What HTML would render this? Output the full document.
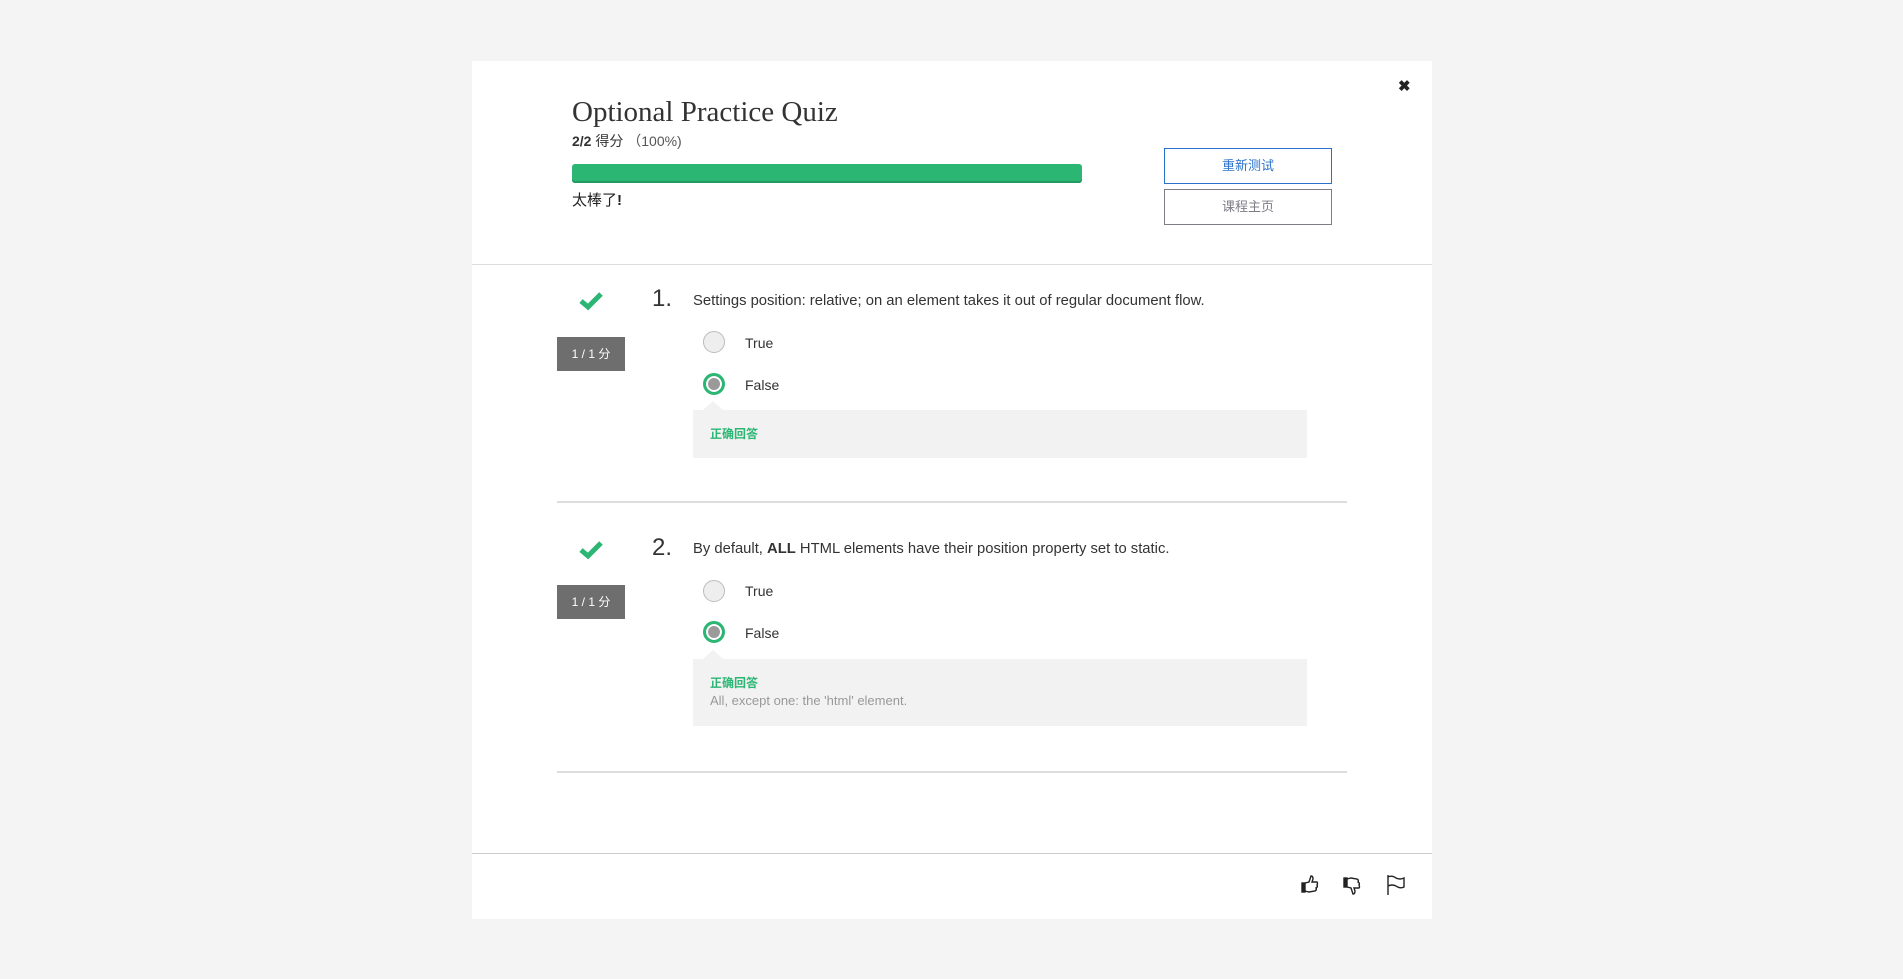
<!DOCTYPE html>
<html><head><meta charset="utf-8"><style>
*{margin:0;padding:0;box-sizing:border-box}
body{width:1903px;height:979px;background:#f4f4f4;position:relative;overflow:hidden;font-family:"Liberation Sans","Noto Sans CJK SC",sans-serif;color:#333}
.a{position:absolute}
.card{left:472px;top:61px;width:960px;height:858px;background:#fff}
.btn{width:168px;height:36px;border:1px solid #2a73cc;color:#2a73cc;font-size:13px;text-align:center;line-height:34px;background:#fff}
.rad{width:22px;height:22px;border-radius:50%;border:1px solid #bbb;background:#eee}
.rad.sel{border:3px solid #2bb673;background:#9a9a9a;box-shadow:inset 0 0 0 2px #fff}
.lbl{font-size:14px;color:#333;line-height:18px}
.badge{width:68px;height:34px;background:#6e6e6e;color:#fff;font-size:12px;text-align:center;line-height:34px}
.fb{background:#f2f2f2}
.fb:before{content:"";position:absolute;left:10px;top:-9px;border-left:10px solid transparent;border-right:10px solid transparent;border-bottom:9px solid #f2f2f2}
.ok{color:#2bb673;font-weight:bold;font-size:12px}
.num{font-size:24px;color:#333;font-weight:300;line-height:28px}
.q{font-size:14.8px;color:#333;line-height:18px}
.hr{height:2px;background:#ddd}
</style></head><body>
<div class="a card"></div>
<div class="a" style="left:1398px;top:80px;font-size:15px;font-weight:bold;color:#222;line-height:14px">✖</div>
<div class="a" style="left:572px;top:95px;font-family:'Liberation Serif',serif;font-size:29px;color:#333;line-height:34px">Optional Practice Quiz</div>
<div class="a" style="left:572px;top:132px;font-size:14px;line-height:18px"><b>2/2</b> 得分 <span style="color:#555">（100%)</span></div>
<div class="a" style="left:572px;top:164px;width:510px;height:19px;background:#2bb673;border-radius:3px;box-shadow:inset 0 -2px 0 #239a60"></div>
<div class="a" style="left:572px;top:191px;font-size:15px;line-height:20px;color:#222">太棒了<b>!</b></div>
<div class="a btn" style="left:1164px;top:148px">重新测试</div>
<div class="a btn" style="left:1164px;top:189px;border-color:#7d7d87;color:#7d7d87">课程主页</div>
<div class="a" style="left:472px;top:264px;width:960px;height:1px;background:#ddd"></div>

<!-- Q1 -->
<svg class="a" style="left:579px;top:291px" width="24" height="20" viewBox="0 0 24 20"><path d="M2 10 L9 16 L22 3" fill="none" stroke="#2bb673" stroke-width="5"/></svg>
<div class="a badge" style="left:557px;top:337px">1 / 1 分</div>
<div class="a num" style="left:652px;top:285px">1.</div>
<div class="a q" style="left:693px;top:292px">Settings position: relative; on an element takes it out of regular document flow.</div>
<div class="a rad" style="left:703px;top:331px"></div>
<div class="a lbl" style="left:745px;top:334px">True</div>
<div class="a rad sel" style="left:703px;top:373px"></div>
<div class="a lbl" style="left:745px;top:376px">False</div>
<div class="a fb" style="left:693px;top:410px;width:614px;height:48px"></div>
<div class="a ok" style="left:710px;top:425px">正确回答</div>
<div class="a hr" style="left:557px;top:501px;width:790px"></div>

<!-- Q2 -->
<svg class="a" style="left:579px;top:540px" width="24" height="20" viewBox="0 0 24 20"><path d="M2 10 L9 16 L22 3" fill="none" stroke="#2bb673" stroke-width="5"/></svg>
<div class="a badge" style="left:557px;top:585px">1 / 1 分</div>
<div class="a num" style="left:652px;top:534px">2.</div>
<div class="a q" style="left:693px;top:540px">By default, <b>ALL</b> HTML elements have their position property set to static.</div>
<div class="a rad" style="left:703px;top:580px"></div>
<div class="a lbl" style="left:745px;top:582px">True</div>
<div class="a rad sel" style="left:703px;top:621px"></div>
<div class="a lbl" style="left:745px;top:624px">False</div>
<div class="a fb" style="left:693px;top:659px;width:614px;height:67px"></div>
<div class="a ok" style="left:710px;top:674px">正确回答</div>
<div class="a" style="left:710px;top:693px;font-size:13px;color:#999">All, except one: the 'html' element.</div>
<div class="a hr" style="left:557px;top:771px;width:790px"></div>

<div class="a" style="left:472px;top:853px;width:960px;height:1px;background:#ccc"></div>
<svg class="a" style="left:1300px;top:874px" width="20" height="20" viewBox="0 0 20 20" fill="none" stroke="#222" stroke-width="1.4"><rect x="2" y="9" width="3" height="9" fill="#222"/><path d="M5 9 L9 8 L11 2 Q13 2 13 5 L12 8 L17 8 Q18 9 17 11 Q18 13 16 14 Q17 16 15 17 L9 18 L5 17"/></svg>
<svg class="a" style="left:1342px;top:876px" width="20" height="20" viewBox="0 0 20 20" fill="none" stroke="#222" stroke-width="1.4"><rect x="2" y="2" width="3" height="9" fill="#222"/><path d="M5 11 L9 12 L11 18 Q13 18 13 15 L12 12 L17 12 Q18 11 17 9 Q18 7 16 6 Q17 4 15 3 L9 2 L5 3"/></svg>
<svg class="a" style="left:1386px;top:874px" width="20" height="22" viewBox="0 0 20 22" fill="none" stroke="#222" stroke-width="1.4"><path d="M2 1 L2 21"/><path d="M2 3 Q6 1 10 4 Q14 6 18 4 L18 13 Q14 15 10 12 Q6 10 2 12"/></svg>
</body></html>
